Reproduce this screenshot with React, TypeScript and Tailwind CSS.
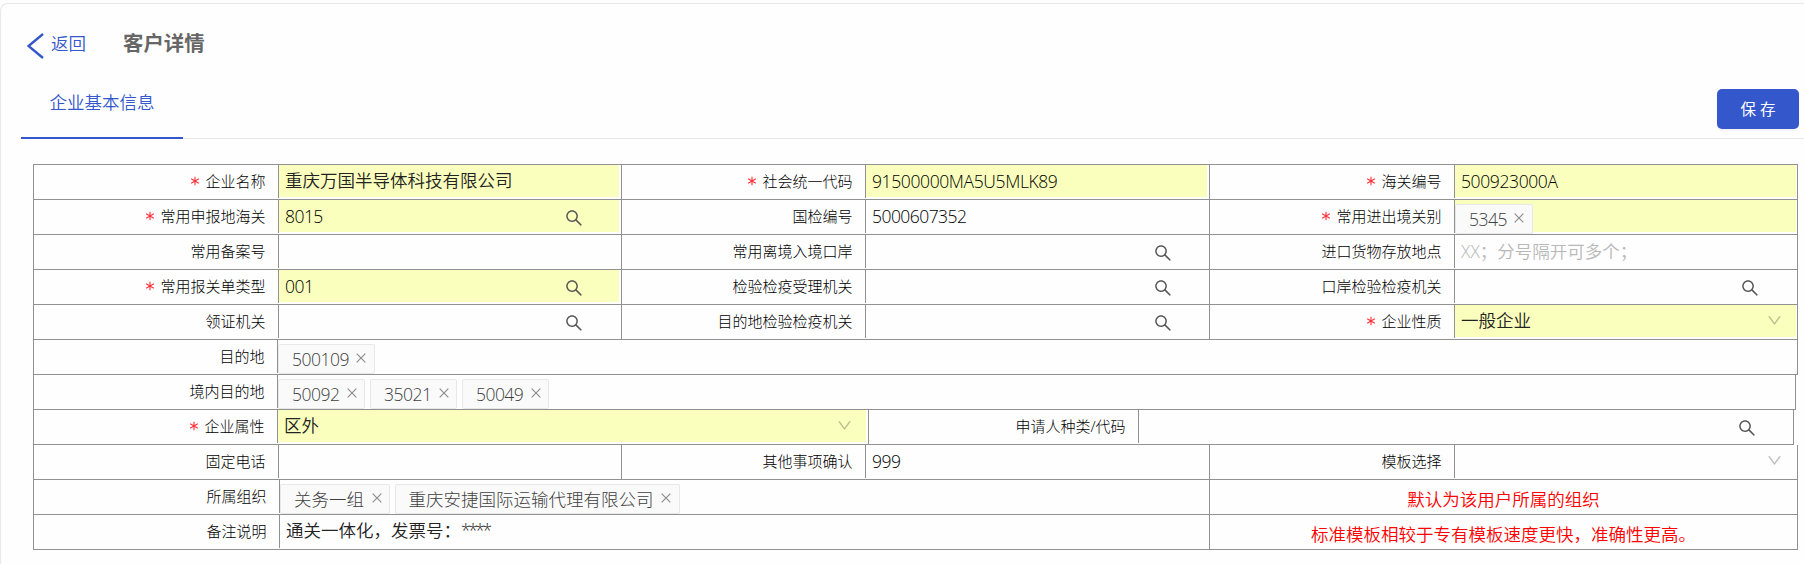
import type { ReactNode } from "react";
import { AiOutlineClose, AiOutlineDown, AiOutlineSearch } from "react-icons/ai";

type FieldProps = {
  label: string;
  required?: boolean;
  className: string;
  labelClass: string;
  filled?: boolean;
  edge?: string;
  children?: ReactNode;
};

function Field({ label, required, className, labelClass, filled, edge = "mr-[2px]", children }: FieldProps) {
  return (
    <div className={`flex h-[34px] shrink-0 border-r border-[#919191] ${className}`}>
      <div
        className={`flex h-[33px] shrink-0 items-center justify-end border-r border-[#919191] pr-[12.5px] text-[15px] leading-none font-light text-black ${labelClass}`}
      >
        {required && (
          <svg width="10" height="10" viewBox="0 0 10 10" className="mr-[5px] mb-[2px]" stroke="#ff3038" strokeWidth="1.1" aria-hidden="true">
            <path d="M5 0.7V9.3M1.2 2.8L8.8 7.2M8.8 2.8L1.2 7.2" />
          </svg>
        )}
        <span>{label}</span>
      </div>
      <div className={`flex h-[32px] min-w-0 flex-1 ${edge} ${filled ? "bg-[#faffbd]" : ""}`}>{children}</div>
    </div>
  );
}

function Value({ children, kind = "text" }: { children: ReactNode; kind?: "text" | "number" | "code" }) {
  const style = {
    text: "pb-[1px] text-[#222]",
    number: "pt-[2px] tracking-[-0.55px] font-light text-black",
    code: "pt-[2px] tracking-[-0.38px] font-light text-black",
  }[kind];
  return <span className={`ml-[6px] flex h-[32px] items-center leading-none ${style}`}>{children}</span>;
}

function Search({ pad = "pr-[34px]" }: { pad?: string }) {
  return (
    <span className={`ml-auto flex items-center pt-[4px] text-[#555] ${pad}`}>
      <AiOutlineSearch size={20} />
    </span>
  );
}

function Down() {
  return (
    <span className="ml-auto flex items-center pr-[13px] pb-[1px] text-black/25">
      <AiOutlineDown size={17} />
    </span>
  );
}

function Chip({ children, numeric }: { children: ReactNode; numeric?: boolean }) {
  return (
    <span className="mt-[4px] mr-[4.5px] flex h-[30px] shrink-0 items-center rounded-[2px] border border-[#e8e8e8] bg-[#fafafa] pr-[5.5px] pl-[13px] leading-none font-light text-[#404040]">
      <span className={numeric ? "pt-[1px] tracking-[-0.5px]" : "pt-[1px]"}>{children}</span>
      <AiOutlineClose size={14} className="-mt-[2px] ml-[5.5px] text-[#8c8c8c]" />
    </span>
  );
}

function Note({ children }: { children: ReactNode }) {
  return (
    <div className="flex h-[34px] w-[588px] items-center justify-center border-r border-[#919191] pt-[5px] leading-none text-[#f00]">
      {children}
    </div>
  );
}

function Row({ children, first }: { children: ReactNode; first?: boolean }) {
  return (
    <div className={`flex w-fit border-b border-l border-[#919191] ${first ? "h-[36px] border-t" : "h-[35px]"}`}>
      {children}
    </div>
  );
}

const A = { className: "w-[588px]", labelClass: "w-[245px]" };
const B = { className: "w-[588px]", labelClass: "w-[244px]" };
const C = { className: "w-[588px]", labelClass: "w-[245px]", edge: "mr-px" };

export default function App() {
  return (
    <div className="h-[564px] w-[1804px] overflow-hidden bg-[#fefefe] pt-[3px] font-['Open_Sans','Noto_Sans_CJK_SC',sans-serif] text-[17.5px] font-[350]">
      <div className="h-[600px] w-[1820px] rounded-tl-[8px] border-t border-l border-[#e8e8e8]">
        <header className="flex h-[75px] items-center pl-[26px] leading-none">
          <svg width="17" height="26" viewBox="0 0 17 26" fill="none" className="mt-[8px] shrink-0">
            <path d="M16 1 L1.5 13 L16 25" stroke="#3458cc" strokeWidth="2.4" />
          </svg>
          <span className="mt-[4px] ml-[7px] text-[#3458cc]">返回</span>
          <h1 className="mt-[4px] ml-[37px] text-[20.4px] font-bold text-[#666]">客户详情</h1>
        </header>

        <nav className="ml-[20px] flex h-[60px] w-[1784px] justify-between border-b border-[#e8e8e8]">
          <div className="mb-[-1px] flex h-[60px] w-[162px] justify-center border-b-2 border-[#3458cc] pt-[12px] text-[#3458cc]">
            <span className="leading-[22px]">企业基本信息</span>
          </div>
          <button className="mt-[10px] mr-[6px] flex h-[40px] w-[82px] items-center justify-center rounded-[5px] bg-[#3458cc] pt-[2px] text-[15.5px] font-normal text-white shadow-[0_2px_2px_rgba(0,0,0,0.05)]">
            保 存
          </button>
        </nav>

        <main className="mt-[25px] ml-[32px]">
          <Row first>
            <Field {...A} label="企业名称" required filled><Value>重庆万国半导体科技有限公司</Value></Field>
            <Field {...B} label="社会统一代码" required filled><Value kind="code">91500000MA5U5MLK89</Value></Field>
            <Field {...C} label="海关编号" required filled><Value kind="code">500923000A</Value></Field>
          </Row>
          <Row>
            <Field {...A} label="常用申报地海关" required filled><Value kind="number">8015</Value><Search pad="pr-[35px]" /></Field>
            <Field {...B} label="国检编号"><Value kind="number">5000607352</Value></Field>
            <Field {...C} label="常用进出境关别" required filled><Chip numeric>5345</Chip></Field>
          </Row>
          <Row>
            <Field {...A} label="常用备案号" />
            <Field {...B} label="常用离境入境口岸"><Search /></Field>
            <Field {...C} label="进口货物存放地点">
              <span className="ml-[6px] flex h-[32px] items-center pt-px leading-none text-[#b8b8b8]">XX；分号隔开可多个；</span>
            </Field>
          </Row>
          <Row>
            <Field {...A} label="常用报关单类型" required filled><Value kind="number">001</Value><Search pad="pr-[35px]" /></Field>
            <Field {...B} label="检验检疫受理机关"><Search /></Field>
            <Field {...C} label="口岸检验检疫机关"><Search pad="pr-[36px]" /></Field>
          </Row>
          <Row>
            <Field {...A} label="领证机关"><Search pad="pr-[35px]" /></Field>
            <Field {...B} label="目的地检验检疫机关"><Search /></Field>
            <Field {...C} label="企业性质" required filled><Value>一般企业</Value><Down /></Field>
          </Row>
          <Row>
            <Field className="w-[1764px]" labelClass="w-[244px]" label="目的地"><Chip numeric>500109</Chip></Field>
          </Row>
          <Row>
            <Field className="w-[1762px]" labelClass="w-[244px]" label="境内目的地">
              <Chip numeric>50092</Chip>
              <Chip numeric>35021</Chip>
              <Chip numeric>50049</Chip>
            </Field>
          </Row>
          <Row>
            <Field className="w-[835px]" labelClass="w-[244px]" label="企业属性" required filled><Value>区外</Value><Down /></Field>
            <Field className="w-[925px]" labelClass="w-[270px]" label="申请人种类/代码"><Search /></Field>
          </Row>
          <Row>
            <Field {...A} label="固定电话" />
            <Field {...B} label="其他事项确认"><Value kind="number">999</Value></Field>
            <Field {...C} label="模板选择"><Down /></Field>
          </Row>
          <Row>
            <Field className="w-[1176px]" labelClass="w-[246px]" label="所属组织">
              <Chip>关务一组</Chip>
              <Chip>重庆安捷国际运输代理有限公司</Chip>
            </Field>
            <Note>默认为该用户所属的组织</Note>
          </Row>
          <Row>
            <Field className="w-[1176px]" labelClass="w-[246px]" label="备注说明">
              <Value>
                通关一体化，发票号：<span className="tracking-[-2.5px]">****</span>
              </Value>
            </Field>
            <Note>标准模板相较于专有模板速度更快，准确性更高。</Note>
          </Row>
        </main>
      </div>
    </div>
  );
}
